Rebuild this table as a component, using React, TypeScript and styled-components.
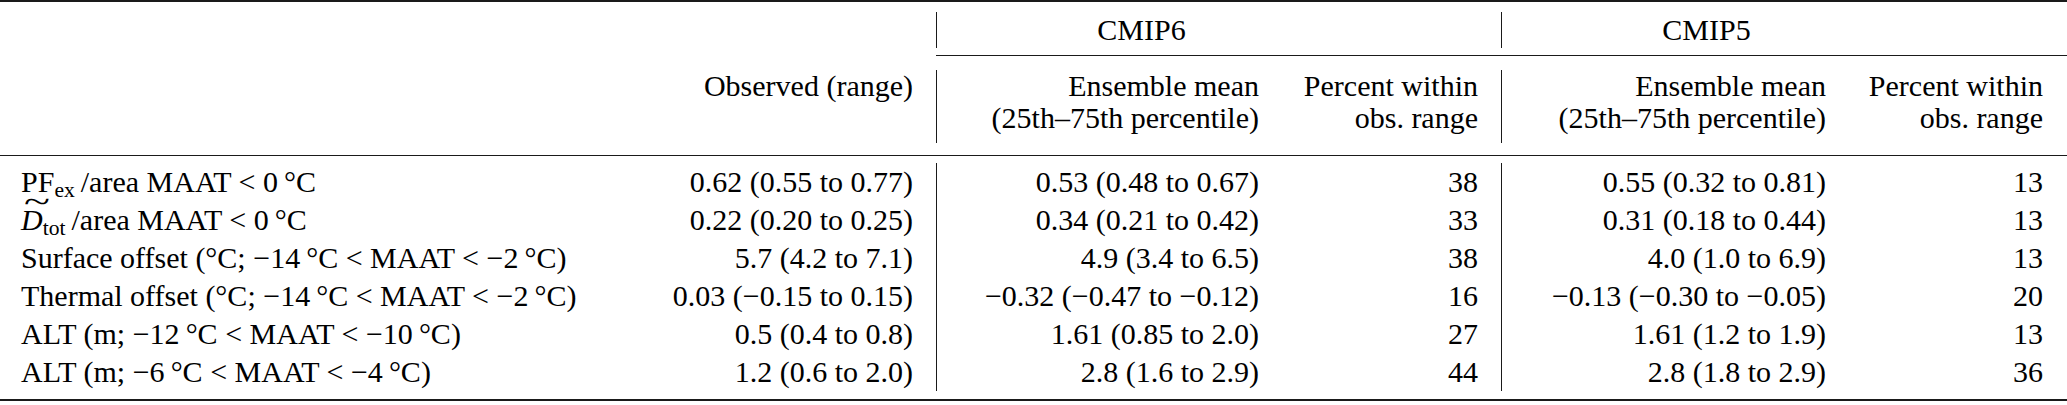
import React from "react";
import styled, { createGlobalStyle } from "styled-components";

const GlobalStyle = createGlobalStyle`
  html, body {
    margin: 0;
    padding: 0;
    background: #fff;
    overflow: hidden;
    font-family: "Liberation Serif", Tinos, "Times New Roman", Times, "DejaVu Serif", serif;
  }
`;

const COLS = "560px 353px 23px 1px 322px 219px 23px 1px 324px 217px 24px";

const Table = styled.div`
  width: 2067px;
  font-family: "Liberation Serif", Tinos, "Times New Roman", Times, "DejaVu Serif", serif;
  font-size: 30px;
  color: #000;
`;

const Rule = styled.div<{ $weight: number }>`
  height: ${props => props.$weight}px;
  background: #1a1a1a;
`;

const Band = styled.div<{ $rows: string; $pad: string }>`
  display: grid;
  grid-template-columns: ${COLS};
  grid-template-rows: ${props => props.$rows};
  padding: ${props => props.$pad};
`;

const CmidRule = styled.div`
  grid-column: 4 / -1;
  height: 1px;
  background: #1a1a1a;
`;

const Sep = styled.div<{ $col: number }>`
  grid-column: ${props => props.$col};
  grid-row: 1 / -1;
  background: #1a1a1a;
`;

const Cell = styled.div<{ $col: string; $row: number; $align: "left" | "right" | "center"; $lh: number }>`
  grid-column: ${props => props.$col};
  grid-row: ${props => props.$row};
  text-align: ${props => props.$align};
  line-height: ${props => props.$lh}px;
  white-space: nowrap;
`;

const GroupCell = styled(Cell)`
  padding-right: 132px;
`;

const LabelCell = styled(Cell)`
  padding-left: 21px;
`;

const Sub = styled.span`
  font-size: 0.72em;
  vertical-align: -0.22em;
  line-height: 0;
`;

const TildeD = styled.span`
  position: relative;
  display: inline-block;
  font-style: italic;
  line-height: 1;
  &::before {
    content: "~";
    position: absolute;
    left: 0.1em;
    top: -0.6em;
    font-style: normal;
    transform: scaleX(1.6);
    transform-origin: left center;
  }
`;

const T = "\u2009";

interface RowData {
  label: React.ReactNode;
  obs: string;
  m6: string;
  p6: string;
  m5: string;
  p5: string;
}

const rows: RowData[] = [
  {
    label: <>PF<Sub>ex</Sub>{T}/area MAAT &lt; 0{T}°C</>,
    obs: "0.62 (0.55 to 0.77)", m6: "0.53 (0.48 to 0.67)", p6: "38", m5: "0.55 (0.32 to 0.81)", p5: "13",
  },
  {
    label: <><TildeD>D</TildeD><Sub>tot</Sub>{T}/area MAAT &lt; 0{T}°C</>,
    obs: "0.22 (0.20 to 0.25)", m6: "0.34 (0.21 to 0.42)", p6: "33", m5: "0.31 (0.18 to 0.44)", p5: "13",
  },
  {
    label: <>Surface offset (°C; −14{T}°C &lt; MAAT &lt; −2{T}°C)</>,
    obs: "5.7 (4.2 to 7.1)", m6: "4.9 (3.4 to 6.5)", p6: "38", m5: "4.0 (1.0 to 6.9)", p5: "13",
  },
  {
    label: <>Thermal offset (°C; −14{T}°C &lt; MAAT &lt; −2{T}°C)</>,
    obs: "0.03 (−0.15 to 0.15)", m6: "−0.32 (−0.47 to −0.12)", p6: "16", m5: "−0.13 (−0.30 to −0.05)", p5: "20",
  },
  {
    label: <>ALT (m; −12{T}°C &lt; MAAT &lt; −10{T}°C)</>,
    obs: "0.5 (0.4 to 0.8)", m6: "1.61 (0.85 to 2.0)", p6: "27", m5: "1.61 (1.2 to 1.9)", p5: "13",
  },
  {
    label: <>ALT (m; −6{T}°C &lt; MAAT &lt; −4{T}°C)</>,
    obs: "1.2 (0.6 to 2.0)", m6: "2.8 (1.6 to 2.9)", p6: "44", m5: "2.8 (1.8 to 2.9)", p5: "36",
  },
];

const BODY_LH = 38;
const HEAD_LH = 32;

const App: React.FC = () => {
  return (
    <Table>
      <GlobalStyle />
      <Rule $weight={2} />

      <Band $rows="36px" $pad="10px 0 7px">
        <Sep $col={4} />
        <Sep $col={8} />
        <GroupCell $col="5 / 7" $row={1} $align="center" $lh={36}>CMIP6</GroupCell>
        <GroupCell $col="9 / 11" $row={1} $align="center" $lh={36}>CMIP5</GroupCell>
      </Band>

      <Band $rows="1px" $pad="0">
        <CmidRule />
      </Band>

      <Band $rows="73px" $pad="14px 0 12px">
        <Sep $col={4} />
        <Sep $col={8} />
        <Cell $col="2" $row={1} $align="right" $lh={HEAD_LH}>Observed (range)</Cell>
        <Cell $col="5" $row={1} $align="right" $lh={HEAD_LH}>Ensemble mean<br />(25th–75th percentile)</Cell>
        <Cell $col="6" $row={1} $align="right" $lh={HEAD_LH}>Percent within<br />obs. range</Cell>
        <Cell $col="9" $row={1} $align="right" $lh={HEAD_LH}>Ensemble mean<br />(25th–75th percentile)</Cell>
        <Cell $col="10" $row={1} $align="right" $lh={HEAD_LH}>Percent within<br />obs. range</Cell>
      </Band>

      <Rule $weight={1} />

      <Band $rows={`repeat(${rows.length}, ${BODY_LH}px)`} $pad="7px 0 8px">
        <Sep $col={4} />
        <Sep $col={8} />
        {rows.map((r, i) => (
          <React.Fragment key={i}>
            <LabelCell $col="1" $row={i + 1} $align="left" $lh={BODY_LH}>{r.label}</LabelCell>
            <Cell $col="2" $row={i + 1} $align="right" $lh={BODY_LH}>{r.obs}</Cell>
            <Cell $col="5" $row={i + 1} $align="right" $lh={BODY_LH}>{r.m6}</Cell>
            <Cell $col="6" $row={i + 1} $align="right" $lh={BODY_LH}>{r.p6}</Cell>
            <Cell $col="9" $row={i + 1} $align="right" $lh={BODY_LH}>{r.m5}</Cell>
            <Cell $col="10" $row={i + 1} $align="right" $lh={BODY_LH}>{r.p5}</Cell>
          </React.Fragment>
        ))}
      </Band>

      <Rule $weight={2} />
    </Table>
  );
};

export default App;
